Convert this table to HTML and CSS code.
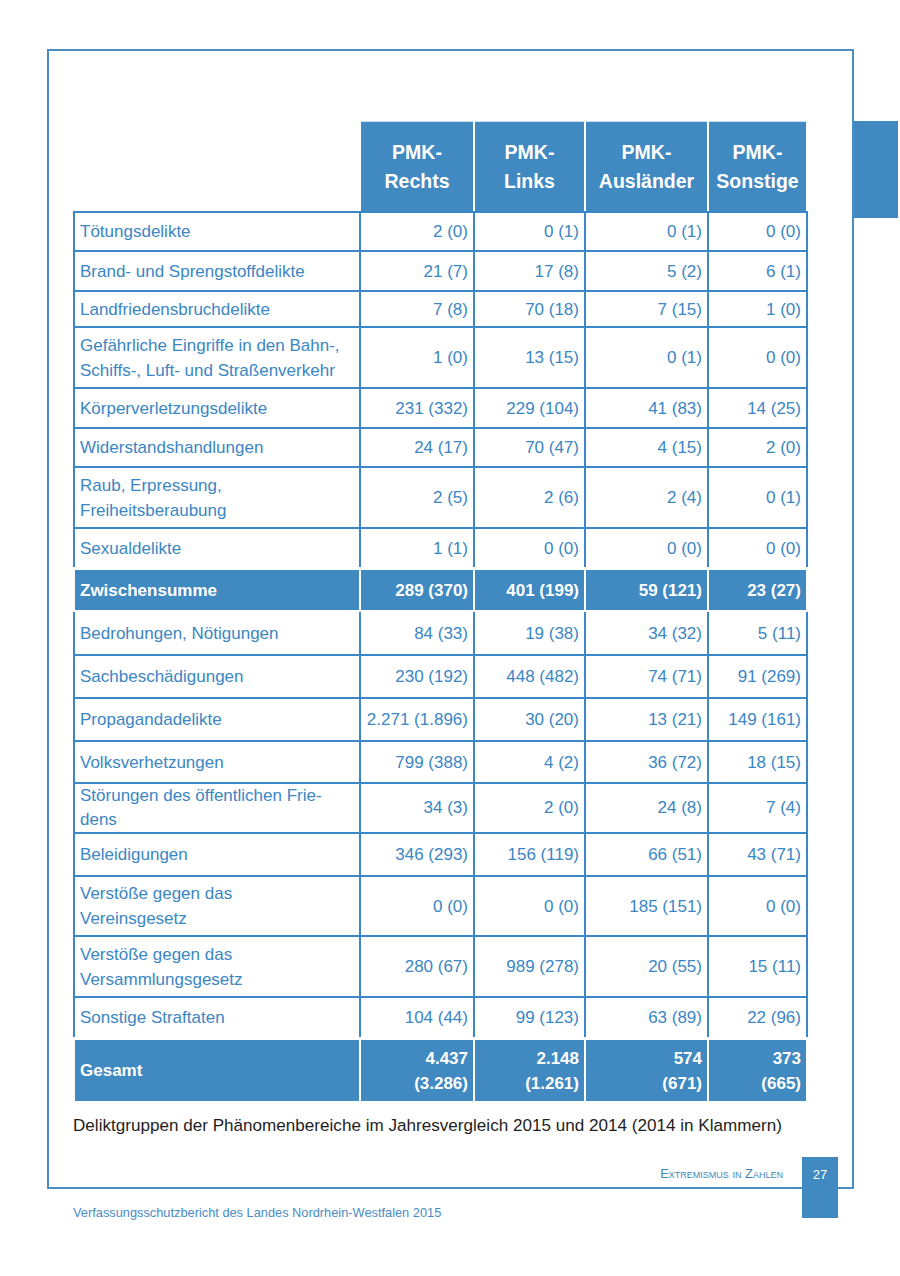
FILE: index.html
```html
<!DOCTYPE html>
<html lang="de">
<head>
<meta charset="utf-8">
<title>Extremismus in Zahlen</title>
<link rel="stylesheet" href="styles.css">
</head>
<body>
<div class="page">
  <div class="frame">
    <table class="stats">
      <colgroup>
        <col class="c0"><col class="c1"><col class="c2"><col class="c3"><col class="c4">
      </colgroup>
      <thead>
        <tr>
          <th class="corner"></th>
          <th class="hd">PMK-<br>Rechts</th>
          <th class="hd">PMK-<br>Links</th>
          <th class="hd">PMK-<br>Ausländer</th>
          <th class="hd">PMK-<br>Sonstige</th>
        </tr>
      </thead>
      <tbody>
        <tr class="h39"><td>Tötungsdelikte</td><td>2 (0)</td><td>0 (1)</td><td>0 (1)</td><td>0 (0)</td></tr>
        <tr class="h40"><td>Brand- und Sprengstoffdelikte</td><td>21 (7)</td><td>17 (8)</td><td>5 (2)</td><td>6 (1)</td></tr>
        <tr class="h36"><td>Landfriedensbruchdelikte</td><td>7 (8)</td><td>70 (18)</td><td>7 (15)</td><td>1 (0)</td></tr>
        <tr class="h61"><td>Gefährliche Eingriffe in den Bahn-,<br>Schiffs-, Luft- und Straßenverkehr</td><td>1 (0)</td><td>13 (15)</td><td>0 (1)</td><td>0 (0)</td></tr>
        <tr class="h40"><td>Körperverletzungsdelikte</td><td>231 (332)</td><td>229 (104)</td><td>41 (83)</td><td>14 (25)</td></tr>
        <tr class="h39"><td>Widerstandshandlungen</td><td>24 (17)</td><td>70 (47)</td><td>4 (15)</td><td>2 (0)</td></tr>
        <tr class="h61"><td>Raub, Erpressung,<br>Freiheitsberaubung</td><td>2 (5)</td><td>2 (6)</td><td>2 (4)</td><td>0 (1)</td></tr>
        <tr class="h40"><td>Sexualdelikte</td><td>1 (1)</td><td>0 (0)</td><td>0 (0)</td><td>0 (0)</td></tr>
        <tr class="sum h45"><td>Zwischensumme</td><td>289 (370)</td><td>401 (199)</td><td>59 (121)</td><td>23 (27)</td></tr>
        <tr class="h42 open"><td>Bedrohungen, Nötigungen</td><td>84 (33)</td><td>19 (38)</td><td>34 (32)</td><td>5 (11)</td></tr>
        <tr class="h43"><td>Sachbeschädigungen</td><td>230 (192)</td><td>448 (482)</td><td>74 (71)</td><td>91 (269)</td></tr>
        <tr class="h43"><td>Propagandadelikte</td><td>2.271 (1.896)</td><td>30 (20)</td><td>13 (21)</td><td>149 (161)</td></tr>
        <tr class="h42"><td>Volksverhetzungen</td><td>799 (388)</td><td>4 (2)</td><td>36 (72)</td><td>18 (15)</td></tr>
        <tr class="h50 tight"><td>Störungen des öffentlichen Frie-<br>dens</td><td>34 (3)</td><td>2 (0)</td><td>24 (8)</td><td>7 (4)</td></tr>
        <tr class="h43"><td>Beleidigungen</td><td>346 (293)</td><td>156 (119)</td><td>66 (51)</td><td>43 (71)</td></tr>
        <tr class="h60"><td>Verstöße gegen das<br>Vereinsgesetz</td><td>0 (0)</td><td>0 (0)</td><td>185 (151)</td><td>0 (0)</td></tr>
        <tr class="h61"><td>Verstöße gegen das<br>Versammlungsgesetz</td><td>280 (67)</td><td>989 (278)</td><td>20 (55)</td><td>15 (11)</td></tr>
        <tr class="h41"><td>Sonstige Straftaten</td><td>104 (44)</td><td>99 (123)</td><td>63 (89)</td><td>22 (96)</td></tr>
        <tr class="sum total"><td>Gesamt</td><td>4.437<br>(3.286)</td><td>2.148<br>(1.261)</td><td>574<br>(671)</td><td>373<br>(665)</td></tr>
      </tbody>
    </table>
    <p class="caption">Deliktgruppen der Phänomenbereiche im Jahresvergleich 2015 und 2014 (2014 in Klammern)</p>
    <div class="running">Extremismus in Zahlen</div>
  </div>
  <p class="footer">Verfassungsschutzbericht des Landes Nordrhein-Westfalen 2015</p>
  <div class="tab"></div>
  <div class="pageno">27</div>
</div>
</body>
</html>
```
FILE: styles.css
```css
html, body {
  margin: 0;
  padding: 0;
  background: #ffffff;
}

body {
  font-family: "Liberation Sans", Arial, sans-serif;
}

.page {
  position: relative;
  width: 900px;
  height: 1276px;
  box-sizing: border-box;
  padding: 49px 0 0 47px;
}

.frame {
  width: 807px;
  height: 1140px;
  box-sizing: border-box;
  border: 2px solid #4b8cc3;
  padding: 70px 0 0 24px;
  display: flex;
  flex-direction: column;
}

.stats {
  border-collapse: separate;
  border-spacing: 0;
  table-layout: fixed;
  width: 735px;
  font-size: 17px;
  color: #3b86c4;
}

.c0 { width: 288px; }
.c1 { width: 114px; }
.c2 { width: 111px; }
.c3 { width: 123px; }
.c4 { width: 99px; }

.stats th,
.stats td {
  padding: 0;
}

.corner {
  background: #ffffff;
}

.hd {
  height: 90px;
  box-sizing: border-box;
  background: #4189c1;
  color: #ffffff;
  font-size: 19.5px;
  font-weight: bold;
  line-height: 29px;
  text-align: center;
  vertical-align: middle;
  padding-top: 4px;
  border-top: 1px solid #cfe1f0;
  border-right: 2px solid #ffffff;
}

.stats td {
  border-top: 2px solid #3b87c8;
  border-right: 2px solid #3b87c8;
  line-height: 25px;
  vertical-align: middle;
  text-align: right;
  padding-right: 5px;
}

.stats td:first-child {
  border-left: 2px solid #3b87c8;
  text-align: left;
  padding-left: 5px;
  padding-right: 0;
}

.stats tr.tight td {
  line-height: 24px;
}

.stats tr.open td {
  border-top: 0;
}

.stats tr.sum td {
  background: #4189c1;
  color: #ffffff;
  font-weight: bold;
  border-top: 3px solid #ffffff;
  border-right: 2px solid #ffffff;
  border-bottom: 2px solid #ffffff;
}

.stats tr.sum td:first-child {
  border-left: 2px solid #ffffff;
}

.stats tr.total td {
  height: 61px;
  border-bottom: 0;
}

.h36 { height: 36px; }
.h39 { height: 39px; }
.h40 { height: 40px; }
.h41 { height: 41px; }
.h42 { height: 42px; }
.h43 { height: 43px; }
.h45 { height: 45px; }
.h50 { height: 50px; }
.h60 { height: 60px; }
.h61 { height: 61px; }

.caption {
  margin: 15px 0 0 0;
  font-size: 17.1px;
  line-height: 20px;
  color: #1e1e1e;
}

.running {
  margin-top: auto;
  margin-bottom: 5px;
  width: 710px;
  text-align: right;
  font-size: 13px;
  font-variant: small-caps;
  color: #4a86bd;
  line-height: 16px;
}

.footer {
  margin: 16px 0 0 26px;
  font-size: 12.8px;
  line-height: 16px;
  color: #4a8cc4;
}

.tab {
  position: absolute;
  left: 854px;
  top: 121px;
  width: 44px;
  height: 97px;
  background: #4189c1;
}

.pageno {
  position: absolute;
  left: 802px;
  top: 1157px;
  width: 36px;
  height: 61px;
  box-sizing: border-box;
  padding-top: 10px;
  background: #4189c1;
  color: #ffffff;
  font-size: 13px;
  text-align: center;
}
```
